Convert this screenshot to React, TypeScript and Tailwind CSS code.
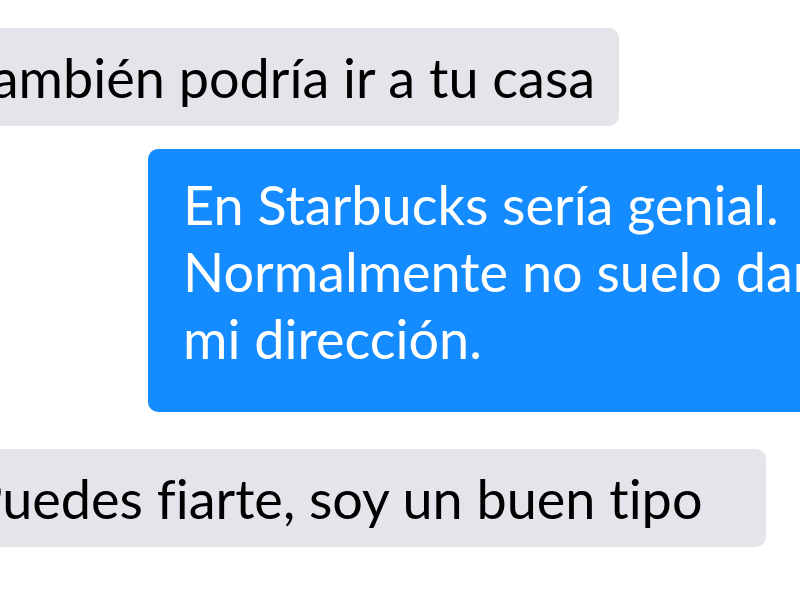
export default function App() {
  return (
    <div className="w-[800px] h-[600px] overflow-hidden bg-white font-['Lato',sans-serif] text-[54px] leading-[67px] [font-variant-ligatures:none]">
      <div className="flex flex-col pt-[28px]">
        {/* incoming */}
        <div className="self-start ml-[-60px] w-[679px] h-[98px] flex items-center pl-[26px] bg-[#e6e4eb] rounded-[10px] text-black whitespace-nowrap">
          También podría ir a tu casa
        </div>

        {/* outgoing */}
        <div className="mt-[23px] ml-[148px] w-[720px] h-[263px] pt-[22px] pl-[35px] bg-[#148bff] rounded-[10px] text-white whitespace-nowrap">
          En Starbucks sería genial.
          <br />
          Normalmente no suelo dar
          <br />
          mi dirección.
        </div>

        {/* incoming */}
        <div className="mt-[37px] self-start ml-[-60px] w-[826px] h-[98px] flex items-center pl-[30px] bg-[#e6e4eb] rounded-[10px] text-black whitespace-nowrap">
          Puedes fiarte, soy un buen tipo
        </div>
      </div>
    </div>
  )
}
